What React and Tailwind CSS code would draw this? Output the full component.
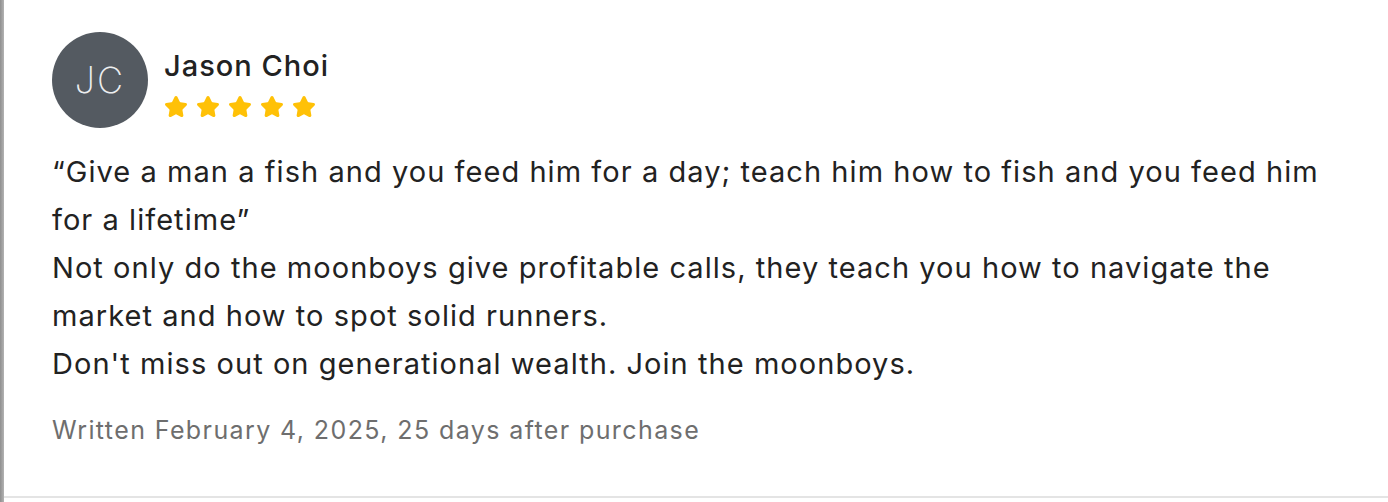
import { Star } from 'lucide-react'

const Stars = ({ count = 5 }) => (
  <div className="flex gap-[8px]">
    {[...Array(count)].map((_, i) => (
      <Star key={i} className="h-6 w-6" fill="#FFC107" stroke="#FFC107" strokeWidth={2} />
    ))}
  </div>
)

const App = () => {
  return (
    <div className="flex min-h-[502px] bg-white font-['Inter',sans-serif] text-[#222]">
      {/* left edge of neighbour */}
      <div className="w-1 bg-gradient-to-r from-[#8f8f8f] to-[#b3b3b3]" />

      <div className="flex-1">
        <div className="h-[498px] border-b-2 border-[#e4e4e4] pl-[48px] pr-[50px] pt-[32px]">
          {/* Author */}
          <div className="flex items-start gap-[16px]">
            <div className="flex h-24 w-24 shrink-0 items-center justify-center rounded-full bg-[#545a61]">
              <span className="text-[36px] font-extralight tracking-[2px] text-[#eceef0]">JC</span>
            </div>
            <div className="pt-[17px]">
              <div className="text-[29px] font-medium leading-[34px] tracking-[1px]">Jason Choi</div>
              <div className="mt-[12px]">
                <Stars />
              </div>
            </div>
          </div>

          {/* Review */}
          <div className="mt-[20px] text-[29px] leading-[48px] tracking-[1.05px]">
            <p>“Give a man a fish and you feed him for a day; teach him how to fish and you feed him for a lifetime”</p>
            <p>Not only do the moonboys give profitable calls, they teach you how to navigate the market and how to spot solid runners.</p>
            <p>Don't miss out on generational wealth. Join the moonboys.</p>
          </div>

          <div className="mt-[26px] text-[25px] leading-[32px] tracking-[1.4px] text-[#6e6e6e]">
            Written February 4, 2025, 25 days after purchase
          </div>
        </div>
      </div>
    </div>
  )
}

export default App
